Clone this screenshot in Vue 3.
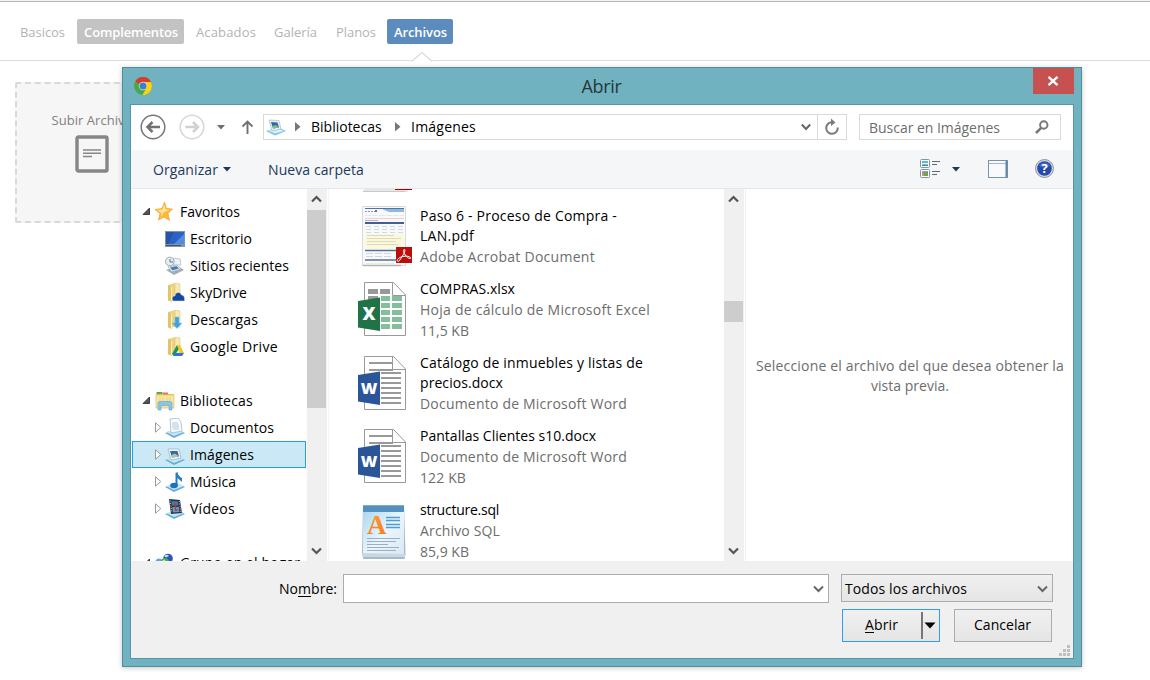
<script setup>
const tabs = [
  { label: 'Basicos', w: 45, box: 59, gap: 5 },
  { label: 'Complementos', w: 94, box: 107, gap: 5, kind: 'grey' },
  { label: 'Acabados', w: 60, box: 74, gap: 4 },
  { label: 'Galería', w: 43, box: 57, gap: 5 },
  { label: 'Planos', w: 40, box: 54, gap: 4 },
  { label: 'Archivos', w: 53, box: 66, gap: 0, kind: 'blue' },
]

const tree = [
  { label: 'Favoritos', w: 60, icon: 'star', root: true },
  { label: 'Escritorio', w: 62, icon: 'desktop' },
  { label: 'Sitios recientes', w: 99, icon: 'recent' },
  { label: 'SkyDrive', w: 57, icon: 'sky' },
  { label: 'Descargas', w: 68, icon: 'down' },
  { label: 'Google Drive', w: 88, icon: 'gdrive' },
  { blank: true },
  { label: 'Bibliotecas', w: 73, icon: 'library', root: true },
  { label: 'Documentos', w: 84, icon: 'docs', node: true },
  { label: 'Imágenes', w: 64, icon: 'pics', node: true, selected: true },
  { label: 'Música', w: 46, icon: 'music', node: true },
  { label: 'Vídeos', w: 45, icon: 'video', node: true },
  { blank: true },
  { label: 'Grupo en el hogar', w: 120, icon: 'group', root: true },
]

const files = [
  { icon: 'pdf', name: [['Paso 6 - Proceso de Compra -', 197], ['LAN.pdf', 54]], info: [['Adobe Acrobat Document', 175]] },
  { icon: 'excel', name: [['COMPRAS.xlsx', 95]], info: [['Hoja de cálculo de Microsoft Excel', 230], ['11,5 KB', 49]] },
  { icon: 'word', name: [['Catálogo de inmuebles y listas de', 223], ['precios.docx', 83]], info: [['Documento de Microsoft Word', 207]] },
  { icon: 'word', name: [['Pantallas Clientes s10.docx', 176]], info: [['Documento de Microsoft Word', 207], ['122 KB', 46]] },
  { icon: 'sql', name: [['structure.sql', 79]], info: [['Archivo SQL', 80], ['85,9 KB', 49]] },
]

// Tracks a label so that it fills the given width in pixels.
const vFit = {
  mounted(el, { value }) {
    const natural = el.getBoundingClientRect().width
    el.style.letterSpacing = `${(value - natural) / el.textContent.length}px`
  },
}
</script>

<template>
  <div class="page">
    <nav class="tabs">
      <div v-for="t in tabs" :key="t.label" class="tab" :class="t.kind" :style="{ width: t.box + 'px', marginRight: t.gap + 'px' }">
        <span v-fit="t.w">{{ t.label }}</span>
      </div>
      <svg class="notch" width="24" height="12"><path d="M1 10 L12 1 L23 10 V12 H1Z" fill="#fff" /><path d="M1.5 10.5 L12 1.5 L22.5 10.5" fill="none" stroke="#d9d9d9" stroke-width="1.2" /></svg>
    </nav>
    <div class="upload">
      <span v-fit="81">Subir Archivo</span>
      <svg width="34" height="38"><rect x="2" y="2" width="30" height="34" rx="1.5" fill="none" stroke="#868686" stroke-width="3.400" /><path d="M8 15h18M8 18.300h18M8 21.600h9" stroke="#868686" stroke-width="1.500" /></svg>
    </div>

    <section class="dialog">
      <header class="title">
        <svg class="chrome" width="18" height="18" viewBox="0 0 18 18">
          <circle cx="9" cy="9" r="9" fill="#4aa84a" />
          <path d="M9 9 L1.200 4.500 A9 9 0 0 1 17 5Z" fill="#dc3a2c" /><path d="M9 5 H17 A9 9 0 0 1 8.500 18 L13 10Z" fill="#fbd311" />
          <circle cx="9" cy="9" r="4.200" fill="#e0e6e4" /><circle cx="9" cy="9" r="3.500" fill="#3d80c8" />
        </svg>
        <span class="caption" v-fit="40">Abrir</span>
        <div class="close"><svg width="12" height="10"><path d="M1.500 .8 L10.500 9.200 M10.500 .8 L1.500 9.200" stroke="#fff" stroke-width="2.300" /></svg></div>
      </header>

      <div class="client">
        <div class="nav">
          <svg class="arrows" width="123" height="27">
            <circle cx="13" cy="13" r="11.800" fill="#fff" stroke="#777" stroke-width="1.500" />
            <path d="M7 13H20M12.500 8L7.500 13L12.500 18" fill="none" stroke="#727272" stroke-width="2.500" />
            <circle cx="52" cy="13" r="11.800" fill="#fff" stroke="#d6d6d6" stroke-width="1.500" />
            <path d="M45.500 13H58.500M53 8L58 13L53 18" fill="none" stroke="#d0d0d0" stroke-width="2.500" />
            <path d="M77 11H85L81 15.500Z" fill="#6e6e6e" />
            <path d="M107.500 20V8M102.500 12.500L107.500 7.500L112.500 12.500" fill="none" stroke="#707070" stroke-width="1.900" />
          </svg>
          <div class="address">
            <svg class="loc" width="20" height="18" viewBox="0 0 20 18"><path d="M0 13L12 9L20 13L9 17.500Z" fill="#7fc0e6" /><path d="M2 12.500L12 10L18 13L9 15.500Z" fill="#d7effb" /><path d="M3 2L13 2.500L15 11L6 13Z" fill="#e9eff2" stroke="#a8bac5" stroke-width=".7" /><path d="M5 4L11.500 4.500L13 9.500L7 10.500Z" fill="#2c6ca4" /><path d="M6.500 8L10 7L13 9.500L7 10.500Z" fill="#88ba8a" /></svg>
            <svg class="sep" width="6" height="10"><path d="M0 0L5.500 4.800L0 9.500Z" fill="#777" /></svg>
            <span class="crumb1" v-fit="74">Bibliotecas</span>
            <svg class="sep2" width="6" height="10"><path d="M0 0L5.500 4.800L0 9.500Z" fill="#777" /></svg>
            <span v-fit="65">Imágenes</span>
            <svg class="chev" width="10" height="8"><path d="M.8 1.500L5 6L9.200 1.500" fill="none" stroke="#666" stroke-width="2" /></svg>
            <div class="refresh"><svg width="16" height="18" viewBox="0 0 16 18"><path d="M7.500 4.200A5.800 5.800 0 1 0 13.800 9.500" fill="none" stroke="#7b7b7b" stroke-width="2" /><path d="M7 .5L11.500 4.500L7 8Z" fill="#7b7b7b" /></svg></div>
          </div>
          <div class="search">
            <span v-fit="131">Buscar en Imágenes</span>
            <svg width="14" height="14"><circle cx="8.800" cy="5" r="3.700" fill="none" stroke="#777" stroke-width="1.900" /><path d="M6.200 7.800L1 13" stroke="#777" stroke-width="2.500" /></svg>
          </div>
        </div>

        <div class="toolbar">
          <span v-fit="65">Organizar</span>
          <svg class="tri" width="8" height="5"><path d="M0 0H8L4 4.500Z" fill="#1e395b" /></svg>
          <span class="newf" v-fit="96">Nueva carpeta</span>
          <svg class="views" width="21" height="20">
            <g fill="#fff" stroke="#8195a8"><rect x=".5" y=".5" width="9" height="8" rx="1" /><rect x=".5" y="10.500" width="9" height="8" rx="1" /></g>
            <path d="M2 2h6v2H2z" fill="#5abbe4" /><path d="M2 4h6v3H2z" fill="#3d8a79" /><path d="M2 4h6v1.500H2z" fill="#dcf5fa" /><path d="M2 12h6v5H2z" fill="#9a8fe0" /><path d="M2 15h3v2H2z" fill="#e09a39" /><path d="M4 13h4v4H4z" fill="#69a646" />
            <path d="M12 2.500h8M12 5.500h5M12 12.500h8M12 15.500h5" stroke="#5a6b7c" />
          </svg>
          <svg class="tri2" width="8" height="5"><path d="M0 0H8L4 4.500Z" fill="#1e395b" /></svg>
          <svg class="pane" width="20" height="18"><rect x=".5" y=".5" width="19" height="17" fill="#f9fafc" stroke="#7894ad" /><path d="M1 3.500H18" stroke="#a6b6c5" /><path d="M18.500 1V17" stroke="#6489a7" stroke-width="2" /></svg>
          <svg class="help" width="19" height="19" viewBox="0 0 19 19"><circle cx="9.500" cy="9.500" r="9" fill="#d5d8de" stroke="#8f949d" /><circle cx="9.500" cy="9.500" r="7.300" fill="#2349ae" /><path d="M4 7A6 6 0 0 1 15 7Q9 10 4 7" fill="#4469c4" /><text x="9.500" y="14" text-anchor="middle" class="q">?</text></svg>
        </div>

        <div class="body">
          <aside class="tree">
            <div v-for="(n, i) in tree" :key="i" class="node" :class="{ root: n.root, selected: n.selected }">
              <template v-if="!n.blank">
                <svg v-if="n.root" class="twist" width="9" height="9"><path d="M7.500 1V7.500H1Z" fill="#555" stroke="#222" stroke-width=".8" /></svg>
                <svg v-else-if="n.node" class="twist" width="9" height="11"><path d="M.5 .8V10.200L5.800 5.500Z" fill="#fff" stroke="#999" /></svg>
                <span v-else class="twist"></span>
                <svg class="ico" width="20" height="20" viewBox="0 0 20 20">
                  <g v-if="n.icon === 'star'"><path d="M9.500 0L11.500 6.500L17.500 7L13 11.500L14.500 18.500L9 15L3.500 18L5 11.500L0 7.500L7 6.500Z" fill="#fdb83c" stroke="#eca036" stroke-width=".7" /><path d="M9.500 2L10.500 7.500L15 8L9 10L6 15L6.500 11L2 8L7.500 7.500Z" fill="#ffe592" /></g>
                  <g v-else-if="n.icon === 'desktop'"><path d="M0 2H20V18H0Z" fill="#8495a8" /><path d="M1 3H19V15H1Z" fill="#2e62c2" /><path d="M9 15L19 5V15Z" fill="#4f8de2" /><path d="M1 3H9L3 15H1Z" fill="#2653ac" /><path d="M1 16.500H16" stroke="#3f5268" /></g>
                  <g v-else-if="n.icon === 'recent'"><path d="M8 2L15 3L16 9L8 9Z" fill="#eef2f5" stroke="#aab4bb" stroke-width=".7" /><path d="M1 14L13 10L19 14L9 19Z" fill="#a5adb4" /><path d="M3 11L12 9L16 13L7 16Z" fill="#eff3f6" stroke="#95a2ac" stroke-width=".6" /><path d="M5 11.500L11.500 10L14 12.500L7.500 14.500Z" fill="#3e83bb" /><circle cx="4.800" cy="5.500" r="4.300" fill="#e3eef3" stroke="#9ba9b2" /><path d="M5 3V6H8" fill="none" stroke="#637785" /></g>
                  <g v-else-if="['sky', 'down', 'gdrive'].includes(n.icon)">
                    <path d="M3 2L10 0V17L3 18Z" fill="#ecd483" /><path d="M10 0L15 1V17L10 17Z" fill="#f7e9b0" stroke="#d6bd72" stroke-width=".5" /><path d="M3 2L7 4V19L3 17Z" fill="#e2c369" /><path d="M6.500 4V18" stroke="#fff1bd" />
                    <path v-if="n.icon === 'sky'" d="M8 18C6 15 8 12.500 10 13C10 9 15 8 16.500 12C19 12 20 15 19.500 18Z" fill="#17479e" stroke="#d9e4ec" stroke-width=".5" />
                    <path v-else-if="n.icon === 'down'" d="M10 7H14V13H17L12 18.500L7 13H10Z" fill="#3fa1e2" stroke="#81c7f2" stroke-width=".6" />
                    <g v-else><path d="M12 8L7 17L9 19L14 12Z" fill="#149858" /><path d="M12 8H15L19 16H15Z" fill="#f6c81d" /><path d="M10 16H19L17 19H8Z" fill="#3272e0" /></g>
                  </g>
                  <g v-else-if="n.icon === 'library'"><path d="M1 1H8L9 3H19V17H1Z" fill="#e3c36b" /><path d="M2 1h5v2H2z" fill="#54a95b" /><path d="M8 1.500h5v2h-5z" fill="#e07655" /><path d="M1 4H19V17H1Z" fill="#f8e6a0" stroke="#d8b65d" stroke-width=".6" /><path d="M5 6V11M8 6V11M12 6V11M15 6V11" stroke="#ecd27f" /><path d="M3 19V12Q3 10.500 5 10.500H15Q17 10.500 17 12V19H14V14.500H6V19Z" fill="#8ac5e8" stroke="#61a4d1" stroke-width=".6" /></g>
                  <g v-else-if="n.icon === 'group'"><circle cx="4" cy="9" r="3.500" fill="#6c9ee0" /><circle cx="13" cy="5.500" r="4.800" fill="#2f55b4" /><circle cx="10" cy="9" r="4" fill="#43ac54" /><path d="M9 3Q12 .5 14 3L11 4.500Z" fill="#cadff5" /><circle cx="9" cy="8" r="1.500" fill="#bce7a9" /><path d="M14 8l4 2v5h-4z" fill="#3876bd" /></g>
                  <g v-else>
                    <path d="M0 15L12 11L20 15L9 20Z" fill="#66acd9" /><path d="M1 14L12 11L19 14L9 18Z" fill="#c5e5f5" />
                    <g v-if="n.icon === 'docs'"><path d="M5 1L13 0L16 4L17 13L6 15Z" fill="#f7fbff" stroke="#9ab1c2" stroke-width=".7" /><path d="M7 5H13M7 7H14M7 9H14M8 11H14" stroke="#a9bdcc" stroke-width=".8" /></g>
                    <g v-else-if="n.icon === 'pics'"><path d="M3 4L14 4L16 13L6 15Z" fill="#f2f5f7" stroke="#9daeb9" stroke-width=".7" /><path d="M5 6L12.500 6L14 11.500L7 12.500Z" fill="#2f6c9f" /><path d="M6.500 10L10 8.500L14 11.500L7 12.500Z" fill="#a7c9b0" /></g>
                    <g v-else-if="n.icon === 'music'"><path d="M10.500 1L12.500 0Q13 4 17 6V10L12.500 6V14H10.500Z" fill="#287cc5" /><ellipse cx="9" cy="13.500" rx="3.800" ry="2.800" fill="#1d70be" /></g>
                    <g v-else><path d="M4 0L15 1L17 14L6 15Z" fill="#29323d" /><path d="M6.500 2L13 2.500L13.500 6.500L7 6.500Z" fill="#407bb8" /><path d="M7.200 8L14 8L14.500 13L8 13.500Z" fill="#6999c8" /><path d="M9 4L12 5L11 10L14 11L10 12Z" fill="#a64336" /><path d="M5.200 1.500L7 14M14.300 2L16 13.500" stroke="#d9e2e8" stroke-width=".9" stroke-dasharray="1 1.500" /></g>
                  </g>
                </svg>
                <span v-fit="n.w" class="lbl">{{ n.label }}</span>
              </template>
            </div>
          </aside>
          <div class="scroll left">
            <svg class="up" width="11" height="8"><path d="M1 6.500L5.500 2L10 6.500" fill="none" stroke="#555" stroke-width="2.200" /></svg>
            <div class="thumb"></div>
            <svg class="dn" width="11" height="8"><path d="M1 1.500L5.500 6L10 1.500" fill="none" stroke="#555" stroke-width="2.200" /></svg>
          </div>

          <main class="files">
            <svg class="cut" width="51" height="4"><path d="M2 0H46V3H1Z" fill="#e6e6e6" /><path d="M1 2.500H43" stroke="#c9c9c9" /><path d="M33 0H50V1H33Z" fill="#a50000" /></svg>
            <div v-for="(f, i) in files" :key="i" class="file">
              <svg width="62" height="64">
                <g v-if="f.icon === 'pdf'">
                  <rect x="4.500" y=".5" width="43" height="59" fill="#f7f9fb" stroke="#dadada" /><path d="M5 59.500H43" stroke="#b5b5b5" stroke-width="1.500" />
                  <path d="M7 2.500H46" stroke="#5970a0" stroke-width="1.200" /><path d="M24 3H46V6H31Z" fill="#8dbbdd" /><path d="M7 5.500H17" stroke="#8d99b8" stroke-dasharray="2 1" /><circle cx="18" cy="5" r="1" fill="#263f99" />
                  <path d="M7 9.500H46" stroke="#e3e9f1" stroke-dasharray="6 1" /><path d="M7 12.500H46" stroke="#f4cccd" /><path d="M7 14.500H20" stroke="#aeb8c8" /><path d="M7 17H46" stroke="#445e93" stroke-width="2" />
                  <path d="M8 20.500H46M8 23.500H46M8 26.500H46" stroke="#d3d8e2" stroke-dasharray="5 3" />
                  <rect x="7" y="28" width="39" height="15" fill="#fbf9dc" /><path d="M9 29.500H36M9 32.500H43M9 35.500H38M9 38.500H40" stroke="#d3d2b8" stroke-width=".8" /><path d="M7 44.500H46M7 54H46" stroke="#556f9f" stroke-width="1.600" /><path d="M8 47.500H34M8 50.500H34" stroke="#d0d7df" stroke-dasharray="7 2" /><path d="M7 57.500H36" stroke="#eceed4" />
                  <rect x="38" y="41" width="16" height="16" fill="#bd0d0a" /><path d="M39.500 53.500C42 50 50 49 52.500 51.500C54 53 50 53 48 50C45 46 45 43 46.500 43.500C48.500 44 44 51 41.500 54.500C40.500 56 38.500 55.500 39.500 53.500Z" fill="none" stroke="#fff" />
                </g>
                <g v-else-if="f.icon === 'sql'">
                  <defs><linearGradient id="pg" x1="0" y1="0" x2="1" y2="1"><stop offset="0" stop-color="#a4d4f0" /><stop offset=".55" stop-color="#ebf6fc" /><stop offset="1" stop-color="#d8e8f4" /></linearGradient><linearGradient id="or" x1="0" y1="0" x2="0" y2="1"><stop offset="0" stop-color="#ff9d25" /><stop offset="1" stop-color="#f47a26" /></linearGradient></defs>
                  <path d="M5 5H46L47.500 54L46.500 59H5.500L4 54Z" fill="#a5bbcb" /><rect x="5" y="6" width="41" height="48" fill="url(#pg)" /><path d="M5 6H46V12H5Z" fill="#5390bf" /><path d="M5 5.500H46" stroke="#7daed1" /><path d="M4 53L48 54L46.500 57H5Z" fill="#c9d8e3" />
                  <text x="9" y="34" class="bigA">A</text><path d="M28 17.500H42M28 20.500H42M28 24.500H42M28 27.500H42" stroke="#4e9bd6" stroke-width="1.500" /><path d="M9 38.500H42M9 41.500H38M9 44.500H30M9 47.500H41M9 50.500H38" stroke="#9aaec4" stroke-width="1.200" />
                </g>
                <g v-else>
                  <path d="M6.500 3.500H35.500L47.500 16V56.500H6.500Z" fill="#fff" stroke="#999" /><path d="M34.500 3.500V16.500H47.500" fill="none" stroke="#999" />
                  <g v-if="f.icon === 'excel'"><path d="M10 10h10v5h-10zM22 10h10v5h-10zM10 17h10v5h-10z" fill="#999" /><path d="M23 17h9v5h-9zM34 17h10v5h-10zM23 24h9v5h-9zM34 24h10v5h-10zM23 31h9v5h-9zM34 31h10v5h-10zM23 38h9v5h-9zM34 38h10v5h-10zM23 45h9v5h-9zM34 45h10v5h-10z" fill="#84be9d" /><path d="M0 22L22 18.500V52L0 48.500Z" fill="#207346" /><text x="11" y="41" text-anchor="middle" class="off">X</text></g>
                  <g v-else><path d="M11 10H35M11 17H35M23 20H43M23 25H43M23 30H43M23 35H43M23 40H43M23 45H43M23 50H43" stroke="#999" stroke-width="2" /><path d="M0 22L22 18.500V52L0 48.500Z" fill="#2a5699" /><text x="11" y="41" text-anchor="middle" class="off w">W</text></g>
                </g>
              </svg>
              <div class="meta">
                <div v-for="l in f.name" :key="l[0]" class="fname"><span v-fit="l[1]">{{ l[0] }}</span></div>
                <div v-for="l in f.info" :key="l[0]" class="finfo"><span v-fit="l[1]">{{ l[0] }}</span></div>
              </div>
            </div>
          </main>
          <div class="scroll right">
            <svg class="up" width="11" height="8"><path d="M1 6.500L5.500 2L10 6.500" fill="none" stroke="#555" stroke-width="2.200" /></svg>
            <div class="thumb"></div>
            <svg class="dn" width="11" height="8"><path d="M1 1.500L5.500 6L10 1.500" fill="none" stroke="#555" stroke-width="2.200" /></svg>
          </div>
          <div class="preview">
            <span v-fit="308">Seleccione el archivo del que desea obtener la</span>
            <span v-fit="78">vista previa.</span>
          </div>
        </div>

        <footer class="foot">
          <div class="row">
            <label class="nombre"><span v-fit="58">No<u>m</u>bre:</span></label>
            <div class="field"><svg width="11" height="8"><path d="M1 1.500L5.500 6L10 1.500" fill="none" stroke="#666" stroke-width="2" /></svg></div>
            <div class="select"><span v-fit="122">Todos los archivos</span><svg width="11" height="8"><path d="M1 1.500L5.500 6L10 1.500" fill="none" stroke="#666" stroke-width="2" /></svg></div>
          </div>
          <div class="row2">
            <div class="btn open"><span v-fit="33"><u>A</u>brir</span><i></i><svg width="12" height="7"><path d="M.5 .5H11.500L6 6.500Z" fill="#000" /></svg></div>
            <div class="btn cancel"><span v-fit="57">Cancelar</span></div>
          </div>
          <svg class="grip" width="11" height="11"><path d="M8 0h3v3h-3zM4 4h3v3h-3zM8 4h3v3h-3zM0 8h3v3h-3zM4 8h3v3h-3zM8 8h3v3h-3z" fill="#bfbfbf" /></svg>
        </footer>
      </div>
    </section>
  </div>
</template>

<style>
body { margin: 0; overflow: hidden; background: #fff; }
</style>

<style scoped>
* { box-sizing: border-box; }
svg { display: block; flex: none; }
span { white-space: nowrap; }
.page { position: relative; width: 1150px; height: 680px; overflow: hidden; background: #fff; font: 14px/20px "Open Sans", "Noto Sans", sans-serif; color: #000; border-top: 1px solid #f3f3f3; }
.tabs { position: relative; display: flex; height: 60px; padding: 17px 0 0 13px; border-top: 1px solid #b5b5b5; border-bottom: 1px solid #dcdcdc; }
.tab { height: 25px; padding-left: 7px; border-radius: 2px; font-size: 13px; line-height: 26px; color: #b3b3b3; }
.tab.grey { background: #c3c3c3; color: #fff; font-weight: 600; }
.tab.blue { background: #5c8bbe; color: #fff; font-weight: 600; }
.notch { position: absolute; left: 410px; top: 49px; }
.upload { display: flex; flex-direction: column; align-items: center; width: 154px; height: 141px; margin: 21px 0 0 15px; padding-top: 26px; background: #f6f6f6; border: 2px dashed #d9d9d9; font-size: 13px; color: #808080; border-radius: 2px; }
.upload svg { margin-top: 5px; }
.dialog { position: absolute; left: 122px; top: 66px; width: 960px; height: 600px; border: 1px solid #528d9b; background: #71b2c1; box-shadow: 0 1px 5px rgba(0, 0, 0, .22); padding: 0 7px 7px; }
.title { position: relative; display: flex; justify-content: center; height: 36px; }
.chrome { position: absolute; left: 4px; top: 9px; }
.caption { font-size: 18px; line-height: 36px; margin-right: 1px; color: #26363a; }
.close { position: absolute; right: 0; top: 0; width: 41px; height: 26px; padding-right: 1px; background: #c75050; display: flex; align-items: center; justify-content: center; }
.client { width: 944px; height: 555px; border: 1px solid #5396a5; background: #fff; }
.nav { display: flex; height: 45px; padding: 9px 0 0 9px; }
.address { display: flex; align-items: center; width: 584px; height: 26px; border: 1px solid #d9d9d9; }
.loc { margin-left: 2px; }
.sep { margin: 0 10px 0 9px; }
.crumb1 { width: 74px; }
.sep2 { margin: 0 10px 0 10px; }
.chev { margin-left: auto; margin-right: 6px; }
.refresh { display: flex; align-items: center; justify-content: center; width: 29px; height: 24px; border-left: 1px solid #d9d9d9; }
.search { display: flex; align-items: center; justify-content: space-between; width: 202px; height: 26px; margin-left: 12px; padding: 0 11px 0 9px; border: 1px solid #d9d9d9; color: #6d6d6d; }
.search span { padding-top: 1px; }
.toolbar { display: flex; align-items: center; height: 39px; padding-left: 22px; background: #f4f6f8; border-bottom: 1px solid #e5e8ea; color: #1e395b; }
.toolbar span { padding-top: 2px; }
.tri { margin: 0 37px 0 5px; }
.views { margin-left: 556px; }
.tri2 { margin: 1px 28px 0 11px; }
.help { margin: -1px 0 0 27px; }
.q { font: bold 13px "Open Sans", sans-serif; fill: #fff; }
.body { display: flex; height: 372px; overflow: hidden; }
.tree { width: 176px; padding: 9px 0 0 1px; overflow: hidden; }
.node { display: flex; align-items: center; width: 174px; height: 27px; padding-left: 22px; border: 1px solid transparent; }
.node.root { padding-left: 9px; }
.twist { width: 9px; margin-right: 1px; }
.root .twist { margin-right: 4px; }
.selected { background: #cbe8f6; border-color: #26a0da; }
.lbl { margin-left: 5px; }
.scroll { position: relative; width: 20px; background: #f0f0f0; }
.scroll svg { position: absolute; left: 4px; }
.scroll .up { top: 6px; }
.scroll .dn { bottom: 6px; }
.thumb { position: absolute; left: 0; width: 19px; background: #cdcdcd; }
.left .thumb { top: 21px; height: 198px; }
.right .thumb { top: 112px; height: 21px; }
.files { flex: none; width: 396px; padding-left: 29px; border-left: 1px solid #f4f4f4; margin-left: 1px; }
.cut { margin: 0 0 13px 4px; }
.file { display: flex; height: 74px; }
.file:nth-of-type(odd) { height: 73px; }
.fname { height: 20px; }
.finfo { height: 21px; line-height: 21px; color: #6d6d6d; }
.off { font: 800 18px "Open Sans", sans-serif; fill: #fff; }
.off.w { font-size: 16px; }
.bigA { font: bold 27px "Liberation Serif", serif; fill: url(#or); }
.preview { flex: 1; display: flex; flex-direction: column; align-items: center; padding: 167px 0 0 1px; margin-left: 1px; border-left: 1px solid #f0f0f0; color: #6d6d6d; }
.foot { position: relative; height: 97px; padding-top: 13px; background: #f0f0f0; }
.row { display: flex; height: 29px; padding-left: 148px; }
.nombre { width: 64px; line-height: 30px; }
u { text-decoration: underline; text-underline-offset: 2px; }
.field { display: flex; align-items: center; justify-content: flex-end; width: 486px; height: 29px; padding-right: 4px; border: 1px solid #abadb3; background: #fff; }
.select { display: flex; align-items: center; justify-content: space-between; width: 212px; height: 28px; margin-left: 12px; padding: 1px 4px 0 3px; border: 1px solid #acacac; background: linear-gradient(#f0f0f0, #e5e5e5); }
.row2 { display: flex; justify-content: flex-end; gap: 14px; margin-top: 6px; padding-right: 21px; }
.btn { display: flex; align-items: center; width: 98px; height: 33px; padding-bottom: 1px; border: 1px solid #acacac; background: linear-gradient(#f0f0f0, #e5e5e5); }
.row2 { margin-top: 6px; }
.open { border-color: #3399ff; padding-left: 22px; }
.open i { width: 2px; height: 27px; margin: 0 1px 0 23px; background: #777; }
.cancel { justify-content: center; padding-right: 1px; }
.grip { position: absolute; right: 3px; bottom: 2px; }
</style>
